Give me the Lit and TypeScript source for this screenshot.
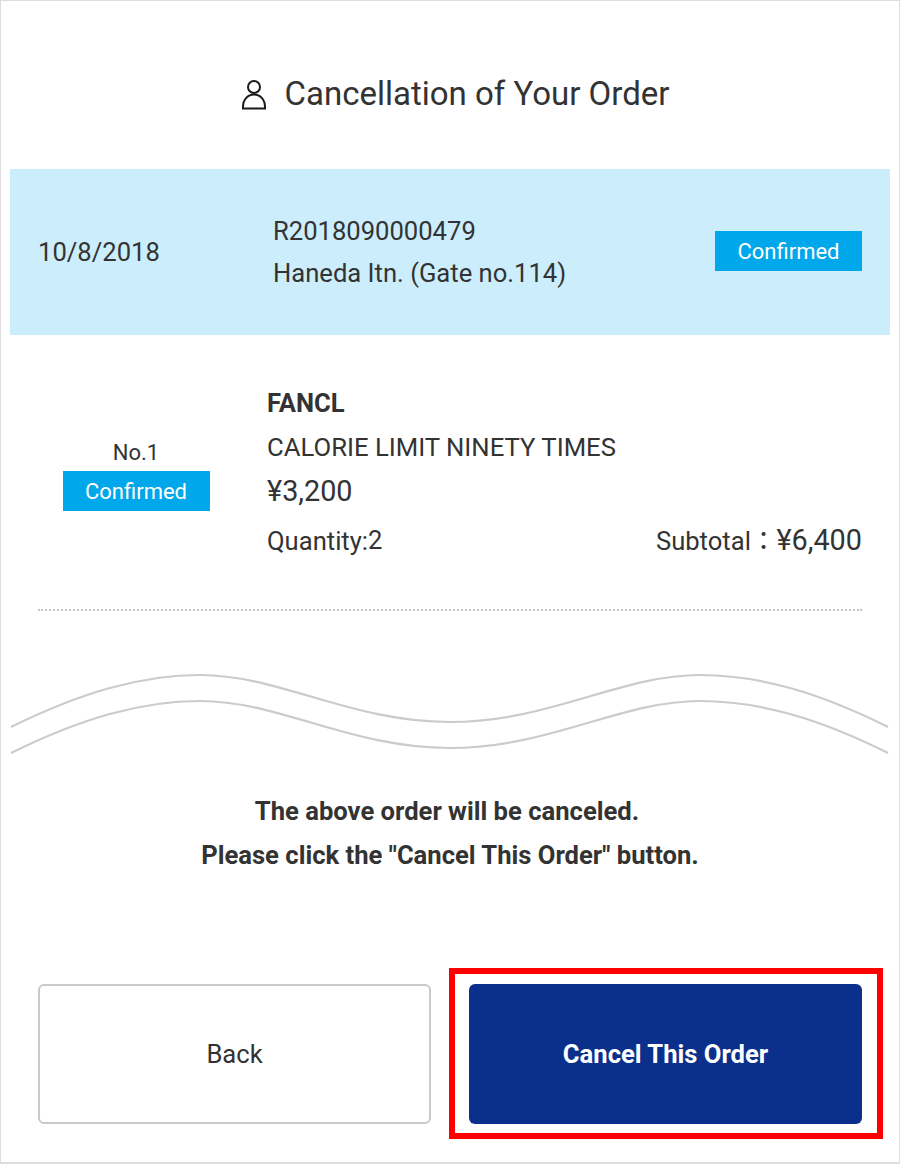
import { LitElement, html, css } from "lit";
import { customElement } from "lit/decorators.js";

@customElement("app-root")
export class AppRoot extends LitElement {
  static styles = css`
    :host { display: block; width: 900px; height: 1164px; font-family: Roboto, "Noto Sans CJK JP", sans-serif; color: #333; }
    * { box-sizing: border-box; }
    .frame { width: 900px; height: 1164px; background: #fff; border: 1px solid #ddd; border-bottom-width: 2px; padding: 0 9px; display: flex; flex-direction: column; }
    .title { height: 168px; display: flex; align-items: center; justify-content: center; gap: 18px; font-size: 33px; font-weight: 400; margin: 0; padding: 16px 0 0 10px; }
    .title svg { display: block; margin-top: 3px; }
    .band { height: 166px; background: #cceefc; display: grid; grid-template-columns: 235px 1fr auto; align-items: center; padding: 0 28px; font-size: 25.6px; }
    .order { line-height: 42px; }
    .badge { background: #00a7ea; color: #fff; width: 147px; height: 40px; display: flex; align-items: center; justify-content: center; font-size: 22px; }
    .band .badge { margin-bottom: 2px; }
    .item { height: 276px; margin: 0 28px; border-bottom: 2px dotted #c4c4c4; display: grid; grid-template-columns: 229px 1fr; padding-top: 46px; }
    .status { display: flex; flex-direction: column; align-items: center; padding-top: 58px; padding-right: 33px; }
    .no { font-size: 22px; line-height: 28px; margin-bottom: 4px; }
    .info { font-size: 25.6px; line-height: 44px; }
    .brand { font-weight: 700; }
    .name { font-size: 25.7px; }
    .price { font-size: 28.8px; line-height: 45px; }
    .row { display: flex; justify-content: space-between; align-items: baseline; line-height: 52px; }
    .qty-n { vertical-align: 1px; }
    .amount { font-size: 28.8px; }
    .wave { display: block; margin-top: 58px; height: 90px; width: 880px; }
    .msg { margin: 30px 0 0; text-align: center; font-size: 25.6px; font-weight: 700; line-height: 44px; }
    .first { padding-right: 6px; }
    .actions { display: grid; grid-template-columns: 393px 393px; gap: 38px; padding: 0 28px; margin-top: 107px; }
    .btn { height: 140px; border-radius: 6px; display: flex; align-items: center; justify-content: center; font-size: 25.6px; }
    .back { border: 2px solid #c9c9c9; background: #fff; }
    .cancel { position: relative; background: #0a308c; color: #fff; font-weight: 700; }
    .cancel::after { content: ""; position: absolute; inset: -16px -21px -15px -20px; border: 6px solid #f00; }
  `;

  render() {
    return html`
      <div class="frame">
        <h1 class="title">
          <svg width="26" height="32" viewBox="0 0 26 32" fill="none" stroke="#1a1a1a" stroke-width="2">
            <circle cx="13" cy="8" r="6"></circle>
            <path d="M2 29.5V28C2 20.5 7 15.5 13 15.5S24 20.5 24 28V29.5Z"></path>
          </svg>
          <span>Cancellation of Your Order</span>
        </h1>
        <section class="band">
          <div>10/8/2018</div>
          <div class="order">
            <div>R2018090000479</div>
            <div>Haneda Itn. (Gate no.114)</div>
          </div>
          <div class="badge">Confirmed</div>
        </section>
        <section class="item">
          <div class="status">
            <div class="no">No.1</div>
            <div class="badge">Confirmed</div>
          </div>
          <div class="info">
            <div class="brand">FANCL</div>
            <div class="name">CALORIE LIMIT NINETY TIMES</div>
            <div class="price">¥3,200</div>
            <div class="row">
              <span>Quantity:<span class="qty-n">2</span></span>
              <span>Subtotal：<span class="amount">¥6,400</span></span>
            </div>
          </div>
        </section>
        <svg class="wave" viewBox="0 0 880 90" fill="none" stroke="#cbcbcb" stroke-width="2.2">
          <path d="M1 58C70 24 130 6 190 6C270 6 340 53 440 53C540 53 610 6 690 6C750 6 810 24 878 58"></path>
          <path d="M1 84C70 50 130 32 190 32C270 32 340 79 440 79C540 79 610 32 690 32C750 32 810 50 878 84"></path>
        </svg>
        <div class="msg">
          <div class="first">The above order will be canceled.</div>
          <div>Please click the "Cancel This Order" button.</div>
        </div>
        <div class="actions">
          <div class="btn back">Back</div>
          <div class="btn cancel">Cancel This Order</div>
        </div>
      </div>
    `;
  }
}
